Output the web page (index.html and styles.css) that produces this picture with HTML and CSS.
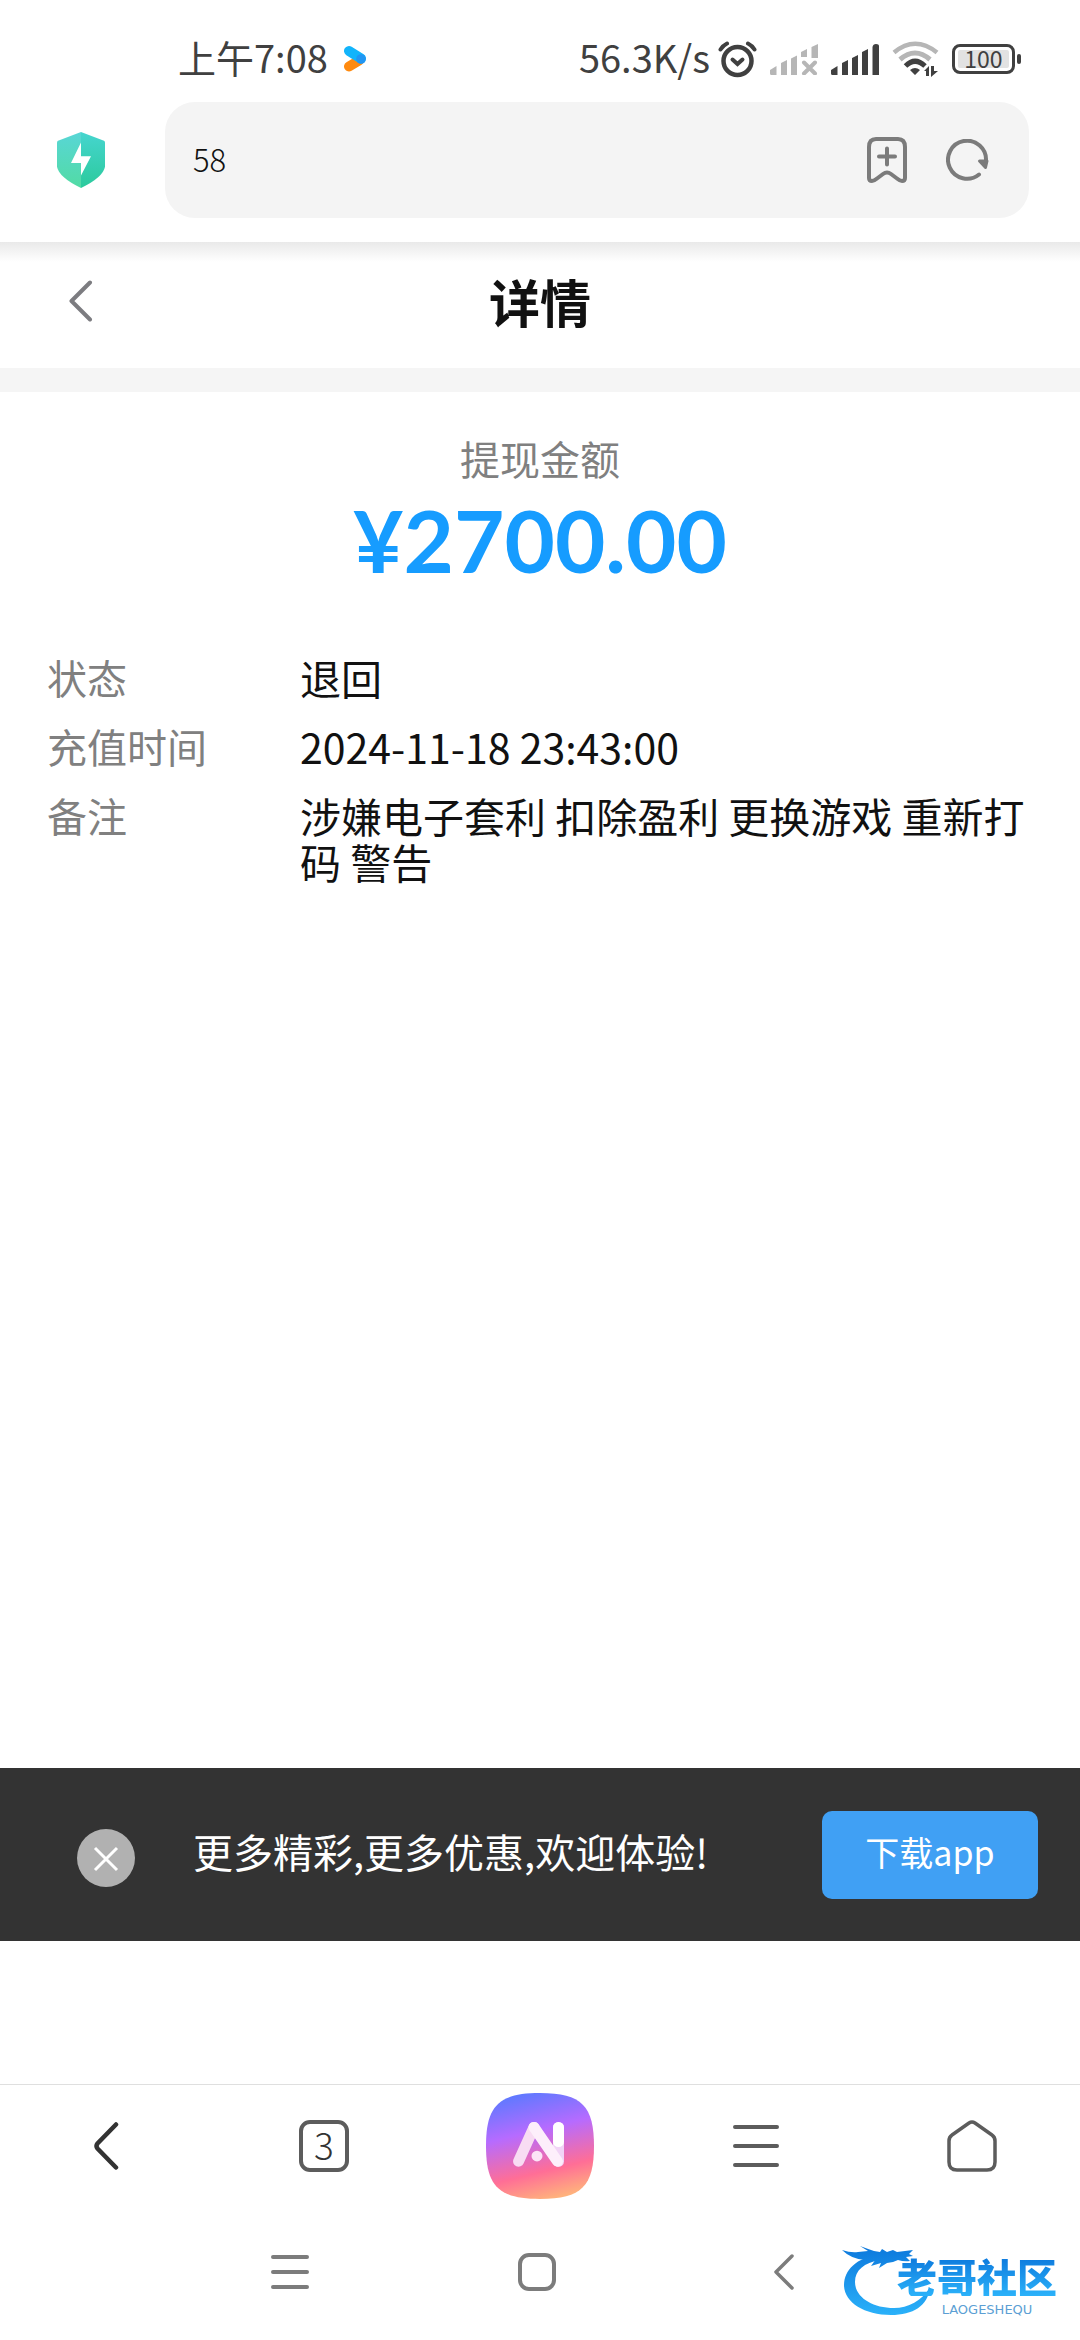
FILE: index.html
```html
<!DOCTYPE html>
<html lang="zh-CN">
<head>
<meta charset="utf-8">
<meta name="viewport" content="width=device-width, initial-scale=1">
<title>详情</title>
<link rel="stylesheet" href="styles.css">
</head>
<body>
<header class="browser-head">
  <div class="status">
    <span class="status-text">上午7:08</span>
    <svg class="status-app" width="24" height="28" viewBox="0 0 24 28" fill="none" stroke-linecap="round">
      <path d="M6 21.500L16 15.500" stroke="#ff8a0f" stroke-width="10"/>
      <path d="M6 6L18 13.500" stroke="#12b4fb" stroke-width="10"/>
      <circle cx="18" cy="14" r="4.800" fill="#2196f3"/>
    </svg>
    <span class="status-text status-speed">56.3K/s</span>
    <div class="status-icons">
      <svg width="39" height="37" viewBox="0 0 39 37" fill="none" stroke="#404040" stroke-width="4.500" stroke-linecap="round">
        <circle cx="19.500" cy="20" r="14"/><path d="M14.500 18.500l5 4.500 5-4.500" stroke-width="4"/>
        <path d="M2.500 8.500Q5 4.500 9 2.500M36.500 8.500Q34 4.500 30 2.500" stroke-width="4"/>
      </svg>
      <svg width="48" height="31" viewBox="0 0 48 31" fill="#b6b6b6">
        <path d="M0 26l6.500-4v9H1.500q-1.500 0-1.500-1.500zM11 19l6-3v15h-6zM21 14.500l6-3V31h-6zM31 8l6-3v8h-6zM41.500 3L48 0v14h-6.500z"/>
        <path d="M34 18.500l11 11M45 18.500l-11 11" stroke="#b6b6b6" stroke-width="4" stroke-linecap="round"/>
      </svg>
      <svg width="48" height="31" viewBox="0 0 48 31" fill="#404040">
        <path d="M0 26l6.500-4v9H1.500q-1.500 0-1.500-1.500zM11 19l6-3v15h-6zM21 14l6-3V31h-6zM31 8l6-3v26h-6zM41.500 3Q42 0 45 0t3 2v29h-6.500z"/>
      </svg>
      <svg width="47" height="36" viewBox="0 0 47 36" fill="none">
        <path d="M2 11.500Q23 -6 45 11.500" stroke="#b6b6b6" stroke-width="4.500"/>
        <path d="M8 18.500Q23 5.500 38 18.500" stroke="#b6b6b6" stroke-width="5"/>
        <path d="M13.500 25Q23 15.500 33 25" stroke="#404040" stroke-width="5"/>
        <path d="M18 29q5-4 10 0l-5 5zM32 30l5-5v10h-3v-5zM39 25h3v5h4l-7 6z" fill="#404040"/>
      </svg>
      <div class="battery"><span class="battery-body">100</span><span class="battery-nub"></span></div>
    </div>
  </div>
  <div class="address">
    <svg width="48" height="56" viewBox="0 0 48 58" preserveAspectRatio="none">
      <defs>
        <linearGradient id="shieldL" x1="0" y1="0" x2="0" y2="1"><stop offset="0" stop-color="#58d6d6"/><stop offset="1" stop-color="#52dba4"/></linearGradient>
        <linearGradient id="shieldR" x1="0" y1="0" x2="0" y2="1"><stop offset="0" stop-color="#46d5cf"/><stop offset="1" stop-color="#2bca9c"/></linearGradient>
      </defs>
      <path d="M24 0L1 9Q0 9.500 0 11v25Q2 47 24 58z" fill="url(#shieldL)"/>
      <path d="M24 0l23 9q1 .5 1 2v25Q46 47 24 58z" fill="url(#shieldR)"/>
      <path d="M24 11L14 32h10v13l10-20H24z" fill="#fff"/>
    </svg>
    <form class="search">
      <input class="search-input" type="text" value="58" aria-label="网址">
      <button class="plain" type="button" aria-label="添加书签">
        <svg width="40" height="46" viewBox="0 0 40 46" fill="none" stroke="#7b7b7b" stroke-width="4" stroke-linecap="round" stroke-linejoin="round">
          <path d="M9 2h22q7 0 7 8v31q0 3-3 3-2 0-5-2.500l-6-4.500q-4-3-8 0l-6 4.500Q7 44 5 44q-3 0-3-3V10q0-8 7-8zM12 19.500h16M20 11.500v16"/>
        </svg>
      </button>
      <button class="plain" type="button" aria-label="刷新">
        <svg width="43" height="42" viewBox="0 0 43 42" fill="none" stroke="#7b7b7b" stroke-width="4" stroke-linecap="round">
          <path d="M33 35.500A19 19 0 1 1 40 22"/><path d="M33.500 22h7.500l-1.500 6.500z" fill="#7b7b7b" stroke-width="3" stroke-linejoin="round"/>
        </svg>
      </button>
    </form>
  </div>
</header>

<div class="titlebar">
  <button class="plain titlebar-back" type="button" aria-label="返回">
    <svg width="24" height="42" viewBox="0 0 24 42" fill="none" stroke="#7c7c80" stroke-width="4" stroke-linecap="round" stroke-linejoin="round"><path d="M21 2.500L2.500 21 21 39.500"/></svg>
  </button>
  <h1 class="title">详情</h1>
</div>

<main class="content">
  <section class="amount">
    <p class="amount-label">提现金额</p>
    <p class="amount-value">¥2700.00</p>
  </section>
  <dl class="details">
    <dt>状态</dt><dd>退回</dd>
    <dt>充值时间</dt><dd>2024-11-18 23:43:00</dd>
    <dt>备注</dt><dd>涉嫌电子套利 扣除盈利 更换游戏 重新打码 警告</dd>
  </dl>
</main>

<aside class="promo">
  <button class="plain promo-close" type="button" aria-label="关闭">
    <svg width="58" height="58" viewBox="0 0 58 58"><circle cx="29" cy="29" r="29" fill="#b1b1b1"/><path d="M18 19l22 22M40 19L18 41" stroke="#fff" stroke-width="3"/></svg>
  </button>
  <p class="promo-text">更多精彩,更多优惠,欢迎体验!</p>
  <button class="promo-btn" type="button">下载app</button>
</aside>

<footer>
  <nav class="toolbar" aria-label="浏览器工具栏">
    <button class="plain" type="button" aria-label="后退">
      <svg width="28" height="48" viewBox="0 0 28 48" fill="none" stroke="#333" stroke-width="4.500" stroke-linecap="round"><path d="M22 2.500L3.500 21.500q-2 2.500 0 5L22 45.500"/></svg>
    </button>
    <button class="plain" type="button" aria-label="标签页"><span class="tabs">3</span></button>
    <button class="plain" type="button" aria-label="AI">
      <svg width="108" height="106" viewBox="0 0 108 110" preserveAspectRatio="none">
        <defs>
          <linearGradient id="ai" x1=".35" y1="0" x2=".6" y2="1"><stop offset="0" stop-color="#5f79ff"/><stop offset=".36" stop-color="#b66bff"/><stop offset=".74" stop-color="#ff6e96"/><stop offset="1" stop-color="#ffb27c"/></linearGradient>
        </defs>
        <path d="M54 0C96 0 108 14 108 55S96 110 54 110 0 96 0 55 12 0 54 0z" fill="url(#ai)"/>
        <g fill="none" stroke-width="11" stroke-linecap="round" stroke-linejoin="round">
          <path d="M72.500 35.500V71" stroke="#f1d4f6"/>
          <path d="M72.500 35.500v15" stroke="#fff"/>
          <path d="M32.500 71L48 35.500" stroke="#f8dcf3"/>
          <path d="M48 35.500L71.500 71" stroke="#fdeffb"/>
        </g>
        <circle cx="51" cy="65.500" r="5.500" fill="#fce4f6"/>
      </svg>
    </button>
    <button class="plain" type="button" aria-label="菜单">
      <svg width="46" height="42" viewBox="0 0 46 42" stroke="#5c5c5c" stroke-width="4" stroke-linecap="round"><path d="M2 2h42M2 21h42M2 40h42"/></svg>
    </button>
    <button class="plain" type="button" aria-label="主页">
      <svg width="50" height="52" viewBox="0 0 50 52" fill="none" stroke="#5c5c5c" stroke-width="3.500"><path d="M22 3q3-2 6 0l17 12q3 2 3 6v21q0 8-8 8H10q-8 0-8-8V21q0-4 3-6z"/></svg>
    </button>
  </nav>
  <nav class="sysnav" aria-label="系统导航">
    <button class="plain" type="button" aria-label="最近任务">
      <svg width="38" height="34" viewBox="0 0 38 34" stroke="#7c7c7c" stroke-width="4" stroke-linecap="round"><path d="M2 2h34M2 17h34M2 32h34"/></svg>
    </button>
    <button class="plain" type="button" aria-label="桌面">
      <svg width="38" height="38" viewBox="0 0 38 38" fill="none" stroke="#7c7c7c" stroke-width="4"><rect x="2" y="2" width="34" height="34" rx="9"/></svg>
    </button>
    <button class="plain" type="button" aria-label="返回上级">
      <svg width="20" height="36" viewBox="0 0 20 36" fill="none" stroke="#7c7c7c" stroke-width="3.500" stroke-linecap="round" stroke-linejoin="round"><path d="M18 2L2 18l16 16"/></svg>
    </button>
    <div class="mark">
      <svg class="mark-dragon" width="90" height="70" viewBox="0 0 90 70">
        <defs><linearGradient id="dragon" gradientUnits="userSpaceOnUse" x1="0" y1="0" x2="0" y2="70"><stop offset="0" stop-color="#0c78dc"/><stop offset="1" stop-color="#2bb2fa"/></linearGradient></defs>
        <g fill="url(#dragon)">
          <path d="M38 8C14 12 2 24 2 39c0 17 20 30 47 30 22 0 37-9 39-28-8 14-22 21-36 21-22 0-39-11-39-26 0-12 9-19 25-22z"/>
          <path d="M0 4q9 3 16 2l10-1-8-5q8 3 14 5l6 1 2-3 5 3 6-2 4 2 8-1 8-1-4 4 4 2-7 1 4 4q-6 1-12-1l-5 2-6 1-8 5 2-5-10 3 5-7-11 1Q9 13 0 4z"/>
        </g>
      </svg>
      <div class="mark-words"><span class="mark-name">老哥社区</span><span class="mark-sub">LAOGESHEQU</span></div>
    </div>
  </nav>
</footer>
</body>
</html>
```
FILE: styles.css
```css
* { box-sizing: border-box; margin: 0; padding: 0; }

body {
  display: flex;
  flex-direction: column;
  min-height: 100vh;
  background: #fff;
  color: #111;
  font-family: "Noto Sans CJK SC", "Noto Sans", sans-serif;
  font-size: 40px;
  line-height: 46px;
}

svg { display: block; flex: none; }

.plain {
  display: flex;
  align-items: center;
  justify-content: center;
  border: 0;
  background: none;
  color: inherit;
  font: inherit;
}

/* Status bar and address bar */
.browser-head { padding-bottom: 24px; }

.status {
  display: flex;
  align-items: center;
  height: 102px;
  padding: 16px 59px 0 178px;
  color: #404040;
}
.status-text { font-size: 38px; padding-bottom: 4px; }
.status-app { margin-left: 15px; }
.status-speed { margin-left: auto; }
.status-icons { display: flex; align-items: center; gap: 13px; margin-left: 8px; }

.battery { display: flex; align-items: center; gap: 2px; }
.battery-body {
  width: 63px;
  height: 30px;
  border: 3px solid #404040;
  border-radius: 8px;
  background: #e2e2e2;
  box-shadow: inset 0 0 0 3px #fff;
  font-size: 23px;
  line-height: 22px;
  text-align: center;
}
.battery-nub { width: 4px; height: 10px; border-radius: 2px; background: #404040; }

.address { display: flex; align-items: center; gap: 60px; padding: 0 51px 0 57px; }
.search {
  display: flex;
  align-items: center;
  gap: 39px;
  flex: 1;
  height: 116px;
  padding: 0 40px 0 28px;
  border-radius: 30px;
  background: #f4f4f4;
}
.search-input {
  flex: 1;
  min-width: 0;
  padding-bottom: 2px;
  border: 0;
  outline: 0;
  background: none;
  color: #111;
  font: 300 31px/46px "Noto Sans CJK SC", sans-serif;
}

/* Page title */
.titlebar {
  display: grid;
  grid-template-columns: 1fr auto 1fr;
  align-items: center;
  height: 150px;
  padding-bottom: 8px;
  border-bottom: 24px solid #f5f5f5;
  background: linear-gradient(#e9e9e9, #f4f4f4 10px, #fff 20px);
}
.titlebar-back { justify-self: start; padding-left: 69px; }
.title { grid-column: 2; font-size: 51px; font-weight: 700; line-height: 60px; }

/* Withdrawal details */
.content { flex: 1; padding: 43px 47px; }
.amount { text-align: center; }
.amount-label { color: #808080; }
.amount-value {
  color: #169cff;
  font: 700 87px/118px Lato, sans-serif;
}
.details {
  display: grid;
  grid-template-columns: 253px 1fr;
  row-gap: 23px;
  margin-top: 55px;
}
.details dt { color: #808080; }
.details dd { font-size: 41px; }

/* Download banner */
.promo {
  display: flex;
  align-items: center;
  height: 173px;
  margin-bottom: 143px;
  padding: 0 42px 0 77px;
  background: #333;
  color: #fff;
}
.promo-close { padding-top: 6px; }
.promo-text { flex: 1; padding: 0 0 8px 58px; }
.promo-btn {
  width: 216px;
  height: 88px;
  padding-bottom: 6px;
  border: 0;
  border-radius: 10px;
  background: #40a0f4;
  color: #fff;
  font: 34px/46px "Noto Sans CJK SC", sans-serif;
}

/* Bottom bars */
.toolbar {
  display: grid;
  grid-template-columns: repeat(5, 1fr);
  align-items: center;
  height: 124px;
  padding-bottom: 2px;
  border-top: 1px solid #dfdfdf;
}
.tabs {
  width: 50px;
  height: 52px;
  border: 4px solid #5c5c5c;
  border-radius: 11px;
  color: #333;
  font-size: 37px;
  font-weight: 300;
  line-height: 40px;
}
.sysnav {
  position: relative;
  display: grid;
  grid-template-columns: repeat(3, 1fr);
  align-items: center;
  height: 132px;
  padding: 0 172px 4px 166px;
}

.mark {
  position: absolute;
  right: 14px;
  bottom: 24px;
  display: flex;
  align-items: flex-end;
}
.mark-dragon { margin-right: -44px; }
.mark-words { display: flex; flex-direction: column; align-items: center; gap: 7px; width: 178px; }
.mark-name {
  background: linear-gradient(#0c78dc, #2bb2fa);
  background-clip: text;
  color: transparent;
  font-size: 40px;
  font-weight: 900;
  line-height: 40px;
}
.mark-sub {
  padding-left: 20px;
  color: #5c9fd4;
  font: 13px/13px "DejaVu Sans", sans-serif;
}
```
